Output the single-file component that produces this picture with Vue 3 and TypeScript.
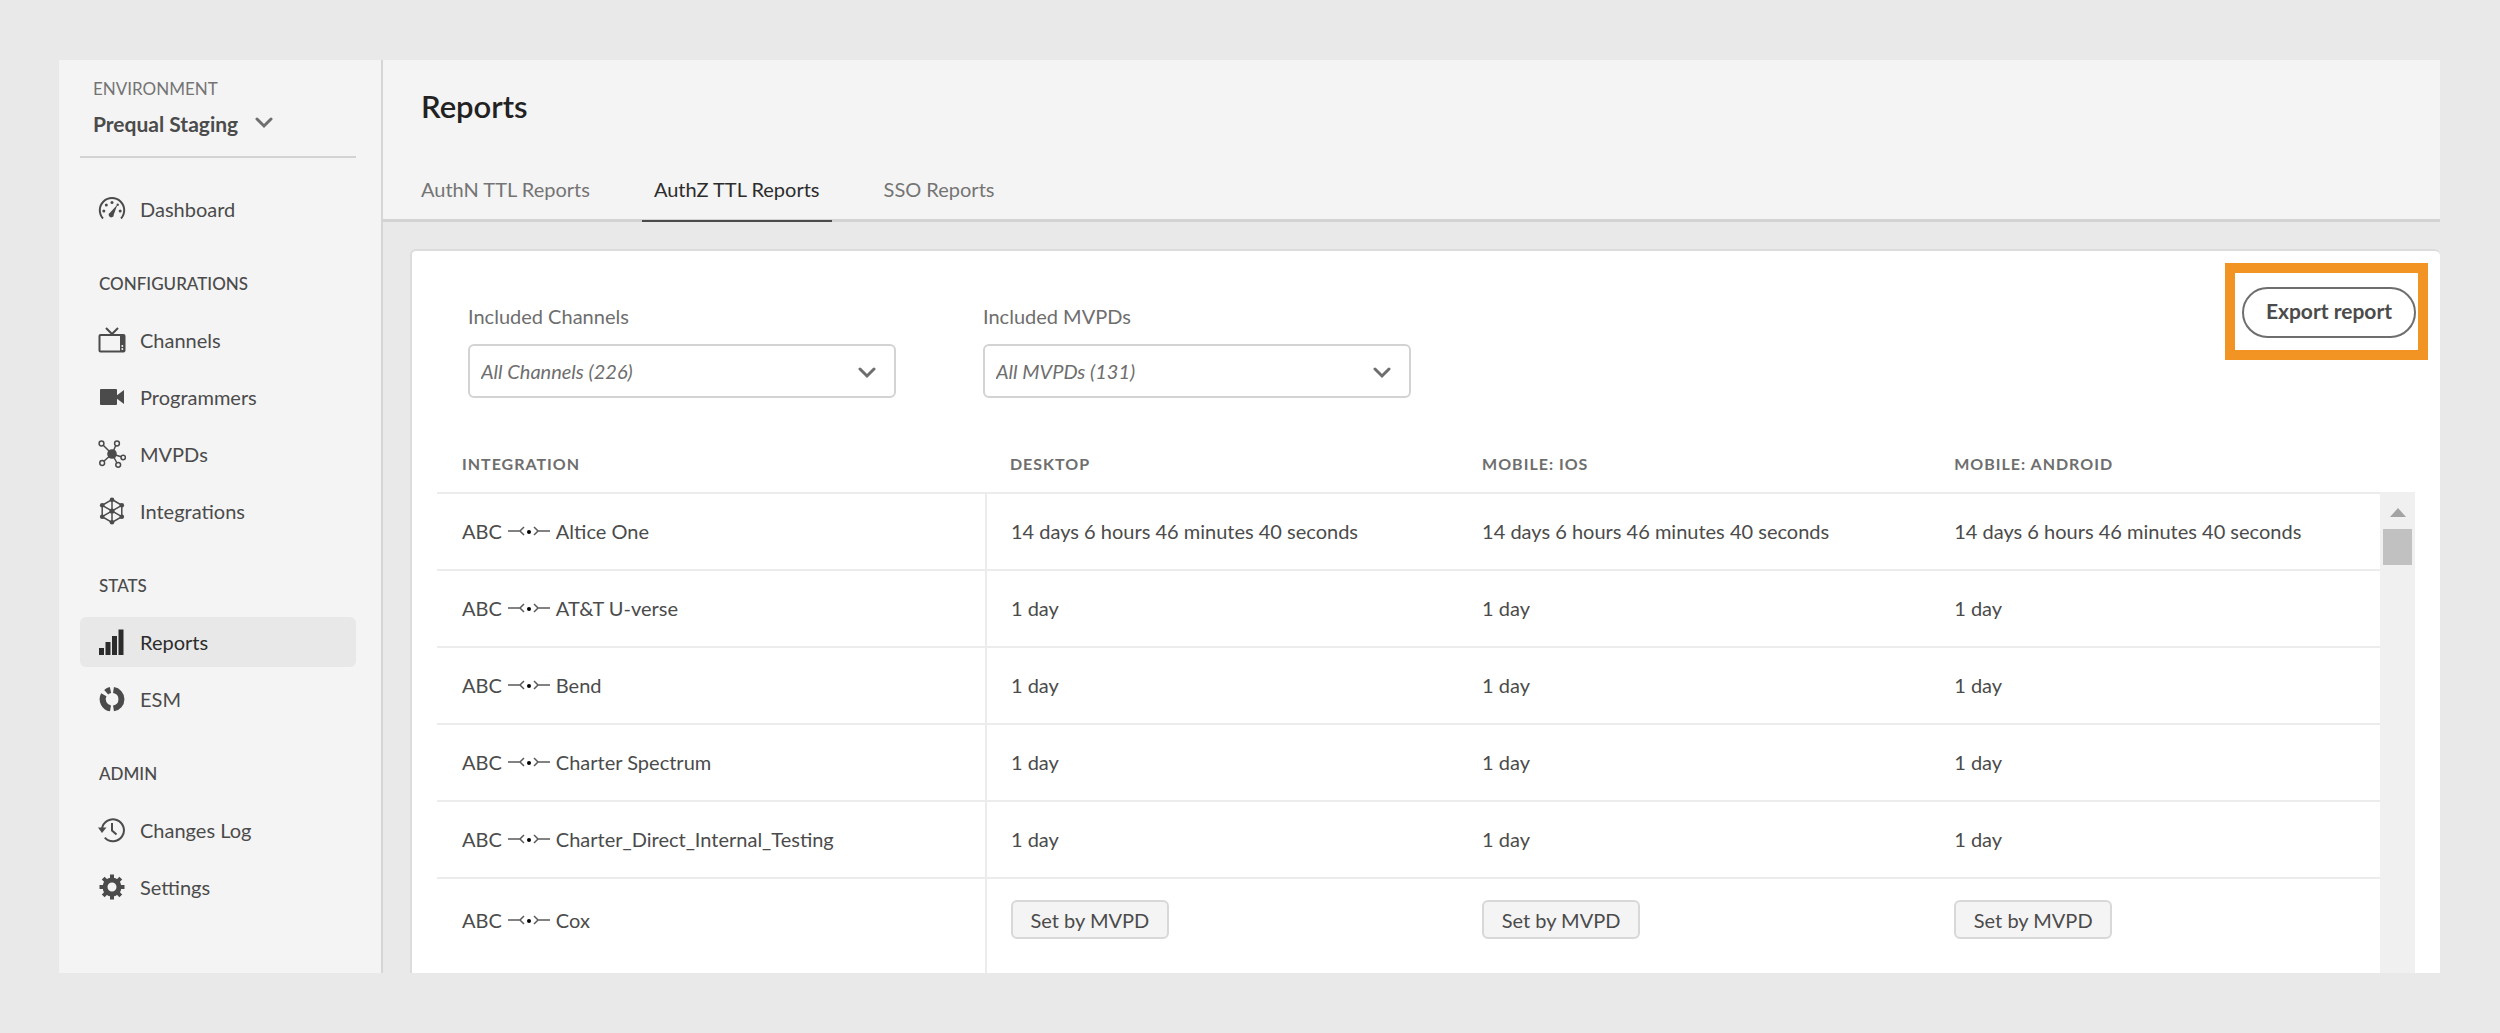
<script setup lang="ts">
import { ref } from 'vue'

type IconName =
  | 'dashboard' | 'channels' | 'programmers' | 'mvpds' | 'integrations'
  | 'reports' | 'esm' | 'changes' | 'settings'

interface NavItem { label: string; icon: IconName; active?: boolean }
interface NavGroup { title?: string; items: NavItem[] }
interface Row { channel: string; mvpd: string; values: string[]; inherited?: boolean }

const groups: NavGroup[] = [
  { items: [{ label: 'Dashboard', icon: 'dashboard' }] },
  {
    title: 'CONFIGURATIONS',
    items: [
      { label: 'Channels', icon: 'channels' },
      { label: 'Programmers', icon: 'programmers' },
      { label: 'MVPDs', icon: 'mvpds' },
      { label: 'Integrations', icon: 'integrations' },
    ],
  },
  {
    title: 'STATS',
    items: [
      { label: 'Reports', icon: 'reports', active: true },
      { label: 'ESM', icon: 'esm' },
    ],
  },
  {
    title: 'ADMIN',
    items: [
      { label: 'Changes Log', icon: 'changes' },
      { label: 'Settings', icon: 'settings' },
    ],
  },
]

const tabs = ['AuthN TTL Reports', 'AuthZ TTL Reports', 'SSO Reports']
const activeTab = ref(1)

const filters = [
  { id: 'channels', label: 'Included Channels', value: 'All Channels (226)' },
  { id: 'mvpds', label: 'Included MVPDs', value: 'All MVPDs (131)' },
]

const columns = ['INTEGRATION', 'DESKTOP', 'MOBILE: IOS', 'MOBILE: ANDROID']

const same = (value: string): string[] => [value, value, value]

const rows: Row[] = [
  { channel: 'ABC', mvpd: 'Altice One', values: same('14 days 6 hours 46 minutes 40 seconds') },
  { channel: 'ABC', mvpd: 'AT&T U-verse', values: same('1 day') },
  { channel: 'ABC', mvpd: 'Bend', values: same('1 day') },
  { channel: 'ABC', mvpd: 'Charter Spectrum', values: same('1 day') },
  { channel: 'ABC', mvpd: 'Charter_Direct_Internal_Testing', values: same('1 day') },
  { channel: 'ABC', mvpd: 'Cox', values: same('Set by MVPD'), inherited: true },
]
</script>

<template>
  <div class="page">
    <div class="frame">
      <aside class="sidebar">
        <div class="environment">
          <label for="environment">ENVIRONMENT</label>
          <div class="environment-picker">
            <select id="environment">
              <option>Prequal Staging</option>
            </select>
            <svg class="chevron" viewBox="0 0 18 12" aria-hidden="true"><path d="M2 2l7 7 7-7" /></svg>
          </div>
        </div>

        <nav aria-label="Main">
          <section v-for="(group, g) in groups" :key="g">
            <h2 v-if="group.title">{{ group.title }}</h2>
            <ul>
              <li v-for="item in group.items" :key="item.label">
                <a href="#" :class="{ active: item.active }">
                  <svg class="icon" viewBox="0 0 28 28" aria-hidden="true">
                    <template v-if="item.icon === 'dashboard'">
                      <path class="line" d="M5 23.500A12.200 12.200 0 1 1 23 23.500" />
                      <path d="M19.500 9.500L15.800 19.400A2.600 2.600 0 1 1 12.200 17.400z" />
                      <circle cx="5.800" cy="16" r="1.500" />
                      <circle cx="8.300" cy="10" r="1.500" />
                      <circle cx="14" cy="7.500" r="1.500" />
                      <circle cx="19.700" cy="9.800" r="1.200" />
                      <circle cx="22.200" cy="16" r="1.500" />
                    </template>
                    <template v-else-if="item.icon === 'channels'">
                      <path class="line" d="M8 2l6 6 6-6" />
                      <rect class="line" x="1.500" y="9" width="25" height="16.500" rx="1" />
                      <path d="M22 9h5v16h-5z" />
                      <circle class="hole" cx="24.300" cy="20" r="1" />
                      <circle class="hole" cx="24.300" cy="23" r="1" />
                    </template>
                    <template v-else-if="item.icon === 'programmers'">
                      <rect x="2" y="6" width="17" height="16" rx="1" />
                      <path d="M18 13l8-6v14l-8-6z" />
                    </template>
                    <template v-else-if="item.icon === 'mvpds'">
                      <circle cx="14" cy="14" r="4.800" />
                      <g class="thin">
                        <path d="M5 5l9 9 4-9M14 14l10 3M14 14l5 9M14 14l-9 8" />
                        <circle class="back" cx="3.500" cy="3.500" r="2.400" />
                        <circle class="back" cx="19" cy="3.500" r="2.400" />
                        <circle class="back" cx="25.200" cy="17.500" r="2.200" />
                        <circle class="back" cx="20.200" cy="24.800" r="2.400" />
                        <circle class="back" cx="4.200" cy="23" r="2.400" />
                      </g>
                    </template>
                    <template v-else-if="item.icon === 'integrations'">
                      <path class="thin" d="M14 2.500l9.800 5.800v11.400L14 25.500l-9.800-5.800V8.300zM14 2.500v23M4.200 8.300l19.600 11.400M23.800 8.300L4.200 19.700" />
                      <circle cx="14" cy="2.700" r="2.300" />
                      <circle cx="23.800" cy="8.300" r="2.300" />
                      <circle cx="23.800" cy="19.700" r="2.300" />
                      <circle cx="14" cy="25.300" r="2.300" />
                      <circle cx="4.200" cy="19.700" r="2.300" />
                      <circle cx="4.200" cy="8.300" r="2.300" />
                      <circle cx="14" cy="14" r="2.600" />
                    </template>
                    <template v-else-if="item.icon === 'reports'">
                      <path d="M1 20h5v7H1zM7.500 14h5v13h-5zM14 8h5v19h-5zM20.500 1.500h5V27h-5z" />
                    </template>
                    <template v-else-if="item.icon === 'esm'">
                      <path class="ring" d="M15.500 5A9.300 9.300 0 0 1 15.500 23.400" />
                      <path class="ring" d="M12.500 23.400A9.300 9.300 0 0 1 5.800 9.800" />
                      <path class="ring" d="M8.200 7.200A9.300 9.300 0 0 1 12.500 5" />
                    </template>
                    <template v-else-if="item.icon === 'changes'">
                      <path class="line" d="M4 13A11 11 0 1 1 6.800 21.700" />
                      <path d="M0 11.500h8.500L4 17z" />
                      <path class="line" d="M14 7v7.500l4.500 4" />
                    </template>
                    <template v-else>
                      <circle class="gear" cx="14" cy="14" r="7" />
                      <path class="teeth" d="M14 1.500V6M14 22v4.500M1.500 14H6M22 14h4.500M5.200 5.200l3 3M19.800 19.800l3 3M5.200 22.800l3-3M19.800 8.200l3-3" />
                    </template>
                  </svg>
                  <span>{{ item.label }}</span>
                </a>
              </li>
            </ul>
          </section>
        </nav>
      </aside>

      <main>
        <header>
          <h1>Reports</h1>
          <nav class="tabs" aria-label="Report types">
            <a
              v-for="(tab, i) in tabs"
              :key="tab"
              href="#"
              :class="{ active: i === activeTab }"
              @click.prevent="activeTab = i"
            >{{ tab }}</a>
          </nav>
        </header>

        <div class="content">
          <div class="card">
            <div class="toolbar">
              <div class="filters">
                <div v-for="filter in filters" :key="filter.id" class="filter">
                  <label :for="filter.id">{{ filter.label }}</label>
                  <div class="picker">
                    <select :id="filter.id">
                      <option>{{ filter.value }}</option>
                    </select>
                    <svg class="chevron" viewBox="0 0 18 12" aria-hidden="true"><path d="M2 2l7 7 7-7" /></svg>
                  </div>
                </div>
              </div>
              <div class="highlight">
                <button type="button" class="export">Export report</button>
              </div>
            </div>

            <div class="report">
              <table>
                <colgroup>
                  <col class="col-integration" />
                  <col class="col-value" />
                  <col class="col-value" />
                  <col />
                </colgroup>
                <thead>
                  <tr>
                    <th v-for="column in columns" :key="column" scope="col">{{ column }}</th>
                  </tr>
                </thead>
                <tbody>
                  <tr v-for="row in rows" :key="row.mvpd" :class="{ inherited: row.inherited }">
                    <td>
                      <span class="pair">
                        {{ row.channel }}
                        <svg class="link" viewBox="0 0 42 10" aria-hidden="true">
                          <path d="M0 5h12M16 1l-4 4 4 4M42 5H30M26 1l4 4-4 4" />
                          <circle cx="21" cy="6" r="2" />
                        </svg>
                        {{ row.mvpd }}
                      </span>
                    </td>
                    <td v-for="(value, v) in row.values" :key="v">
                      <button v-if="row.inherited" type="button" class="tag">{{ value }}</button>
                      <template v-else>{{ value }}</template>
                    </td>
                  </tr>
                </tbody>
              </table>
              <div class="scrollbar" aria-hidden="true">
                <svg viewBox="0 0 16 9"><path d="M0 9l8-9 8 9z" /></svg>
                <div class="thumb"></div>
              </div>
            </div>
          </div>
        </div>
      </main>
    </div>
  </div>
</template>

<style>
body {
  margin: 0;
  background: #e9e9e9;
}
</style>

<style scoped>
* {
  box-sizing: border-box;
}

.page {
  padding: 60px 60px 59px 59px;
  background: #e9e9e9;
  color: #4b4b4b;
  font-family: Lato, "Noto Sans", sans-serif;
  font-size: 20px;
  line-height: 28px;
}

.frame {
  display: flex;
  background: #f4f4f4;
}

a {
  color: inherit;
  text-decoration: none;
}

button,
select {
  font: inherit;
  color: inherit;
}

select {
  appearance: none;
  margin: 0;
  outline: none;
}

.chevron {
  position: absolute;
  width: 18px;
  height: 12px;
  pointer-events: none;
}

.chevron path {
  fill: none;
  stroke: #6e6e6e;
  stroke-width: 3;
  stroke-linecap: round;
}

/* Sidebar */
.sidebar {
  flex: 0 0 324px;
  padding: 16px 25px 61px 21px;
  border-right: 2px solid #d5d5d5;
}

.environment {
  padding: 0 13px 18px;
  margin-bottom: 26px;
  border-bottom: 2px solid #d3d3d3;
}

.environment label {
  display: block;
  font-size: 17px;
  line-height: 26px;
  color: #747474;
}

.environment-picker {
  position: relative;
  display: flex;
  width: fit-content;
  margin-top: 8px;
  height: 28px;
}

.environment-picker select {
  height: 28px;
  padding: 0 34px 0 0;
  border: 0;
  background: none;
  font-size: 21px;
  font-weight: 700;
}

.environment-picker .chevron {
  top: 7px;
  right: 0;
}

.sidebar h2 {
  margin: 0;
  padding: 38px 19px 19px;
  font-size: 17px;
  line-height: 24px;
  font-weight: 500;
}

.sidebar ul {
  display: flex;
  flex-direction: column;
  gap: 7px;
  margin: 0;
  padding: 0;
  list-style: none;
}

.sidebar li a {
  display: flex;
  align-items: center;
  gap: 14px;
  height: 50px;
  padding: 0 18px;
  border-radius: 6px;
}

.sidebar li a.active {
  background: #e8e8e8;
  color: #2c2c2c;
}

.icon {
  flex: none;
  width: 28px;
  height: 28px;
  fill: currentColor;
}

.icon .line {
  fill: none;
  stroke: currentColor;
  stroke-width: 2;
}

.icon .thin {
  fill: none;
  stroke: currentColor;
  stroke-width: 1.5;
}

.icon .hole,
.icon .back {
  fill: #f4f4f4;
}

.icon .ring {
  fill: none;
  stroke: currentColor;
  stroke-width: 6;
}

.icon .gear {
  fill: none;
  stroke: currentColor;
  stroke-width: 5;
}

.icon .teeth {
  fill: none;
  stroke: currentColor;
  stroke-width: 4;
}

/* Page header */
main {
  flex: 1;
  min-width: 0;
  display: flex;
  flex-direction: column;
}

header {
  padding: 28px 26px 0;
  border-bottom: 3px solid #d3d3d3;
}

h1 {
  margin: 0 0 53px;
  padding-left: 12px;
  font-size: 31px;
  line-height: 36px;
  font-weight: 600;
  color: #222;
}

.tabs {
  display: flex;
  gap: 40px;
  margin-bottom: -3px;
  line-height: 24px;
  color: #747474;
}

.tabs a {
  padding: 0 12px 19px;
  border-bottom: 2px solid transparent;
}

.tabs a.active {
  color: #2c2c2c;
  border-color: #4b4b4b;
}

/* Report card */
.content {
  flex: 1;
  display: flex;
  padding: 27px 0 0 27px;
  background: #e9e9e9;
}

.card {
  flex: 1;
  min-width: 0;
  padding: 12px 25px 0;
  border: solid #dcdcdc;
  border-width: 2px 0 0 2px;
  border-radius: 6px 6px 0 0;
  background: #fff;
}

.toolbar {
  display: flex;
  justify-content: space-between;
  align-items: flex-start;
  margin-bottom: 36px;
}

.filters {
  display: flex;
  gap: 87px;
  padding: 39px 0 0 31px;
}

.filter {
  display: flex;
  flex-direction: column;
  gap: 14px;
  width: 428px;
  color: #6e6e6e;
}

.picker {
  position: relative;
}

.picker select {
  display: block;
  width: 100%;
  height: 54px;
  padding: 0 40px 0 11px;
  border: 2px solid #d3d3d3;
  border-radius: 6px;
  background: #fff;
  font-style: italic;
}

.picker .chevron {
  top: 23px;
  right: 20px;
}

.highlight {
  margin-right: -13px;
  padding: 14px 2px 12px 7px;
  border: 10px solid #f29423;
}

.export {
  display: block;
  height: 51px;
  width: 174px;
  padding: 0 0 3px;
  border: 2px solid #6e6e6e;
  border-radius: 26px;
  background: #fff;
  font-size: 21px;
  font-weight: 700;
}

.report {
  display: flex;
}

table {
  flex: 1;
  table-layout: fixed;
  border-spacing: 0;
}

.col-integration {
  width: 28.2%;
}

.col-value {
  width: 24.3%;
}

th,
td {
  padding: 0 0 0 25px;
  text-align: left;
  border-bottom: 2px solid #ececec;
  white-space: nowrap;
}

th {
  padding-top: 18px;
  padding-bottom: 16px;
  font-size: 16px;
  line-height: 24px;
  letter-spacing: 1px;
  color: #6e6e6e;
}

td {
  height: 77px;
  padding-bottom: 2px;
}

td:nth-child(2) {
  padding-left: 24px;
  border-left: 2px solid #ececec;
}

.pair {
  display: flex;
  align-items: center;
  gap: 6px;
}

.link {
  width: 42px;
  height: 10px;
}

.link path {
  fill: none;
  stroke: #5a5a5a;
  stroke-width: 1.5;
}

.inherited td {
  height: 94px;
  padding-top: 21px;
  padding-bottom: 34px;
  border-bottom: 0;
}

.tag {
  display: block;
  height: 39px;
  width: 158px;
  padding: 0;
  border: 2px solid #d8d8d8;
  border-radius: 6px;
  background: #f4f4f4;
}

.scrollbar {
  display: flex;
  flex-direction: column;
  align-items: center;
  gap: 12px;
  width: 35px;
  margin-top: 58px;
  padding-top: 16px;
  background: #f0f0f0;
}

.scrollbar svg {
  width: 16px;
  height: 9px;
  fill: #a3a3a3;
}

.thumb {
  width: 29px;
  height: 36px;
  background: #c1c1c1;
}
</style>
